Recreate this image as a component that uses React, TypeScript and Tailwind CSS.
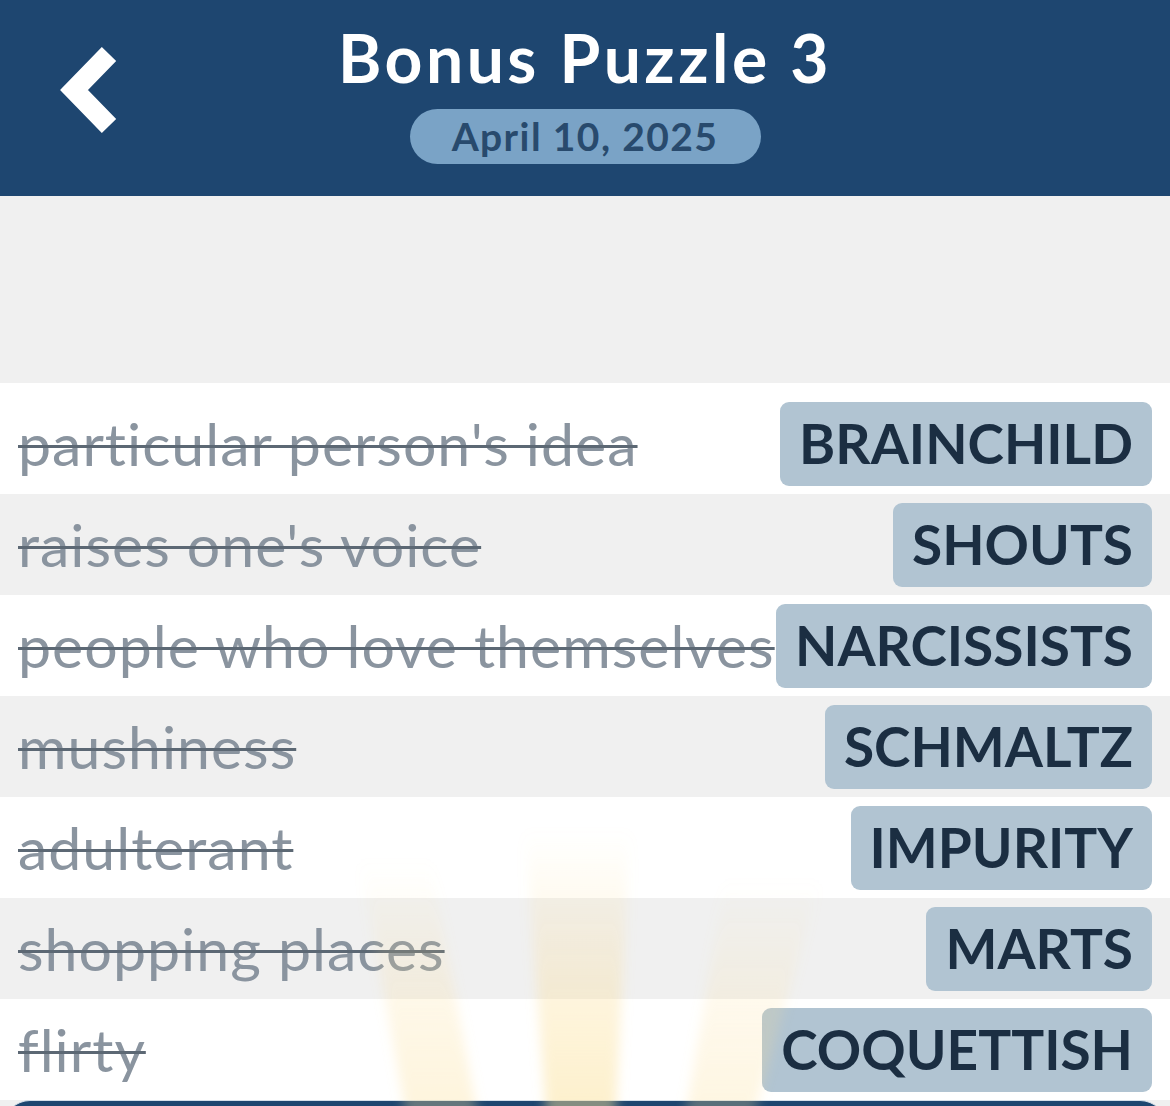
type Clue = {
  id: number;
  clue: string;
  answer: string;
};

const clues: Clue[] = [
  { id: 1, clue: "particular person's idea", answer: "BRAINCHILD" },
  { id: 2, clue: "raises one's voice", answer: "SHOUTS" },
  { id: 3, clue: "people who love themselves", answer: "NARCISSISTS" },
  { id: 4, clue: "mushiness", answer: "SCHMALTZ" },
  { id: 5, clue: "adulterant", answer: "IMPURITY" },
  { id: 6, clue: "shopping places", answer: "MARTS" },
  { id: 7, clue: "flirty", answer: "COQUETTISH" },
];

function BackChevron() {
  return (
    <svg viewBox="0 0 60 90" className="h-[90px] w-[60px]" aria-hidden>
      <polyline
        points="50,8 15,44 50,80"
        fill="none"
        stroke="white"
        strokeWidth="20"
        strokeLinecap="butt"
        strokeLinejoin="miter"
      />
    </svg>
  );
}

// faint sun rays rising from below the list
function LightRays() {
  return (
    <svg
      aria-hidden
      className="pointer-events-none absolute bottom-0 left-0 h-[340px] w-full"
      viewBox="0 0 1170 340"
      preserveAspectRatio="none"
    >
      <defs>
        <linearGradient id="ray" x1="0" y1="1" x2="0" y2="0">
          <stop offset="0" stopColor="#fbdf95" stopOpacity="0.55" />
          <stop offset="0.55" stopColor="#fbdf95" stopOpacity="0.3" />
          <stop offset="1" stopColor="#fbdf95" stopOpacity="0" />
        </linearGradient>
        <filter id="soft" x="-20%" y="-20%" width="140%" height="140%">
          <feGaussianBlur stdDeviation="6" />
        </filter>
      </defs>
      <g filter="url(#soft)">
        <polygon points="550,345 613,345 630,10 525,10" fill="url(#ray)" />
        <polygon points="415,345 487,345 430,40 360,40" fill="url(#ray)" opacity="0.7" />
        <polygon points="677,345 740,345 820,60 725,60" fill="url(#ray)" opacity="0.6" />
      </g>
    </svg>
  );
}

export default function App() {
  return (
    <div className="relative min-h-[1106px] overflow-hidden bg-[#f0f0f0] font-['Lato',sans-serif]">
      <header className="relative flex h-[196px] flex-col items-center bg-[#1e4670] pt-[22px]">
        <button type="button" className="absolute left-[59px] top-[46px]">
          <BackChevron />
        </button>
        <h1 className="text-[66px] font-bold leading-[72px] tracking-[3.5px] text-white">Bonus Puzzle 3</h1>
        <div className="mt-[15px] flex h-[55px] w-[351px] items-center justify-center rounded-full bg-[#7aa3c6]">
          <span className="text-[39px] font-bold tracking-[1.4px] text-[#284a6d]">April 10, 2025</span>
        </div>
      </header>

      <div className="h-[187px]" />

      <div>
        {clues.map((item, index) => (
          <div
            key={item.id}
            className={`flex items-center gap-[10px] px-[18px] ${
              index % 2 === 0 ? "bg-white" : "bg-[#f0f0f0]"
            } ${index === 0 ? "h-[111px] pt-[10px]" : "h-[101px]"}`}
          >
            <span className="min-w-0 whitespace-nowrap text-[59px] leading-none tracking-[1px] text-[#8a949f] line-through decoration-[#5c6874] decoration-[3px]">
              {item.clue}
            </span>
            <span className="ml-auto flex h-[84px] shrink-0 items-center rounded-[9px] bg-[#b1c4d2] px-[19px] text-[55px] font-bold text-[#1b2e42]">
              {item.answer}
            </span>
          </div>
        ))}
      </div>

      <div className="mx-[4px] h-[60px] rounded-t-[26px] border-t border-[#d6e0ea] bg-[#1e4670]" />

      <LightRays />
    </div>
  );
}
